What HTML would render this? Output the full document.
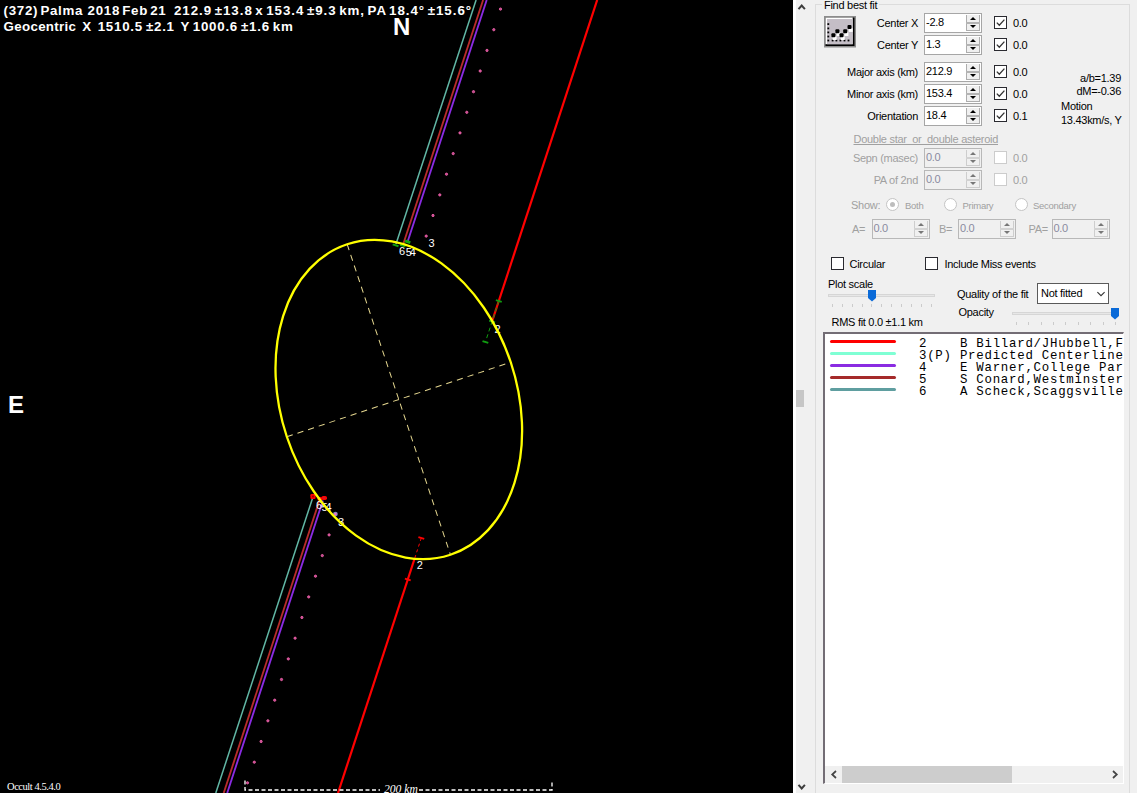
<!DOCTYPE html>
<html>
<head>
<meta charset="utf-8">
<title>Occult - Asteroid occultation plot</title>
<style>
html,body{margin:0;padding:0;background:#f0f0f0;overflow:hidden;}
body{width:1137px;height:793px;position:relative;font-family:"Liberation Sans",sans-serif;font-size:11px;color:#000;}
#plot{position:absolute;left:0;top:0;width:793px;height:793px;background:#000;overflow:hidden;}
#plot svg{position:absolute;left:0;top:0;}
.lab{font-size:11px;}
.pt{position:absolute;color:#fff;white-space:nowrap;line-height:1;}
#panel{position:absolute;left:793px;top:0;width:344px;height:793px;background:#f0f0f0;overflow:hidden;}
.l{letter-spacing:-0.28px;position:absolute;white-space:nowrap;line-height:13px;height:13px;font-size:11px;color:#000;}
.r{text-align:right;}
.dis{color:#a0a0a0;}
.num{position:absolute;box-sizing:border-box;border:1px solid #a6a6a6;background:#fff;height:20px;width:58px;}
.num span{position:absolute;left:1px;top:2px;font-size:11px;line-height:13px;letter-spacing:-0.28px;}
.num i{position:absolute;right:1px;top:1px;width:14px;height:16px;box-sizing:border-box;background:#f0f0f0;border-left:1px solid #adadad;border-right:1px solid #adadad;border-bottom:1px solid #adadad;}
.num i:before{content:"";position:absolute;left:3px;top:2.2px;border:3px solid transparent;border-top:0;border-bottom:3.4px solid #000;}
.num i:after{content:"";position:absolute;left:3px;top:10.2px;border:3px solid transparent;border-bottom:0;border-top:3.4px solid #000;}
.num b{position:absolute;right:1px;top:8px;width:14px;height:2px;background:#b4b4b4;}
.num.dis{background:#f0f0f0;border-color:#b8b8b8;}
.num.dis i{border-color:#cdcdcd;}
.num.dis b{background:#d2d2d2;}
.num.dis span{color:#8a8aa0;}
.num.dis i:before{border-bottom-color:#777;}
.num.dis i:after{border-top-color:#777;}
.cb{position:absolute;box-sizing:border-box;width:13px;height:13px;border:1px solid #2a2a30;background:#fff;}
.cb.dis{border-color:#ccc;}
.rad{position:absolute;box-sizing:border-box;width:13px;height:13px;border:1px solid #c4c4c4;border-radius:50%;background:#fff;}
</style>
</head>
<body>
<div id="plot">
<svg width="793" height="793" viewBox="0 0 793 793">
<!--SVG-->
<line x1="476.1" y1="0" x2="396.0" y2="244" stroke="#62b8a6" stroke-width="1.5" />
<line x1="312.8" y1="497.5" x2="215.8" y2="793" stroke="#62b8a6" stroke-width="1.5" />
<line x1="483.1" y1="0" x2="403.6" y2="243" stroke="#b82c2c" stroke-width="1.85" />
<line x1="319.9" y1="499" x2="223.7" y2="793" stroke="#b82c2c" stroke-width="1.85" />
<line x1="486.7" y1="0" x2="407.5" y2="242" stroke="#8a2be2" stroke-width="1.85" />
<line x1="322.9" y1="500.5" x2="227.2" y2="793" stroke="#8a2be2" stroke-width="1.85" />
<line x1="597.2" y1="0" x2="492.4" y2="320.5" stroke="#ff0000" stroke-width="2.2" />
<line x1="414.8" y1="558" x2="338" y2="793" stroke="#ff0000" stroke-width="2.2" />
<line x1="498.8" y1="301" x2="485.4" y2="342" stroke="#109c10" stroke-width="1" stroke-dasharray="4 3"/>
<line x1="421.3" y1="538" x2="414.8" y2="558" stroke="#ff0000" stroke-width="1" stroke-dasharray="3 3"/>
<line x1="495.9" y1="300.1" x2="501.7" y2="301.9" stroke="#109c10" stroke-width="1.9" />
<line x1="489.2" y1="320.6" x2="495.0" y2="322.4" stroke="#18a818" stroke-width="1.9" />
<line x1="482.5" y1="341.1" x2="488.3" y2="342.9" stroke="#109c10" stroke-width="1.9" />
<line x1="418.4" y1="537.1" x2="424.2" y2="538.9" stroke="#ff0000" stroke-width="1.9" />
<line x1="404.9" y1="578.6" x2="410.7" y2="580.4" stroke="#ff0000" stroke-width="1.9" />
<line x1="392.7" y1="244.4" x2="398.5" y2="246.2" stroke="#10a410" stroke-width="2" />
<line x1="400.1" y1="244.7" x2="405.5" y2="246.5" stroke="#10a410" stroke-width="2" />
<line x1="404.9" y1="240.9" x2="410.3" y2="242.7" stroke="#10a410" stroke-width="3" />
<rect x="310.4" y="494" width="5.2" height="5" rx="1.2" fill="#ff0000"/><rect x="312" y="495.6" width="2" height="1.8" fill="#a00000"/>
<rect x="317.4" y="497" width="5" height="3.6" rx="1.5" fill="#ff0000"/><rect x="321.4" y="496" width="5.6" height="4" rx="1.8" fill="#ff0000"/><rect x="323.4" y="497.4" width="2" height="1.4" fill="#b03030"/>
<circle cx="500.5" cy="9.1" r="1.15" fill="#c04890" stroke="#ff69b4" stroke-width="0.8"/>
<circle cx="493.8" cy="29.7" r="1.15" fill="#c04890" stroke="#ff69b4" stroke-width="0.8"/>
<circle cx="487.0" cy="50.4" r="1.15" fill="#c04890" stroke="#ff69b4" stroke-width="0.8"/>
<circle cx="480.2" cy="71.0" r="1.15" fill="#c04890" stroke="#ff69b4" stroke-width="0.8"/>
<circle cx="473.5" cy="91.7" r="1.15" fill="#c04890" stroke="#ff69b4" stroke-width="0.8"/>
<circle cx="466.8" cy="112.3" r="1.15" fill="#c04890" stroke="#ff69b4" stroke-width="0.8"/>
<circle cx="460.0" cy="132.9" r="1.15" fill="#c04890" stroke="#ff69b4" stroke-width="0.8"/>
<circle cx="453.2" cy="153.6" r="1.15" fill="#c04890" stroke="#ff69b4" stroke-width="0.8"/>
<circle cx="446.5" cy="174.2" r="1.15" fill="#c04890" stroke="#ff69b4" stroke-width="0.8"/>
<circle cx="439.8" cy="194.9" r="1.15" fill="#c04890" stroke="#ff69b4" stroke-width="0.8"/>
<circle cx="433.0" cy="215.5" r="1.15" fill="#c04890" stroke="#ff69b4" stroke-width="0.8"/>
<circle cx="426.2" cy="236.1" r="1.15" fill="#c04890" stroke="#ff69b4" stroke-width="0.8"/>
<circle cx="329.1" cy="534.9" r="1.15" fill="#c04890" stroke="#ff69b4" stroke-width="0.8"/>
<circle cx="322.3" cy="555.6" r="1.15" fill="#c04890" stroke="#ff69b4" stroke-width="0.8"/>
<circle cx="315.5" cy="576.2" r="1.15" fill="#c04890" stroke="#ff69b4" stroke-width="0.8"/>
<circle cx="308.7" cy="596.9" r="1.15" fill="#c04890" stroke="#ff69b4" stroke-width="0.8"/>
<circle cx="301.9" cy="617.5" r="1.15" fill="#c04890" stroke="#ff69b4" stroke-width="0.8"/>
<circle cx="295.1" cy="638.2" r="1.15" fill="#c04890" stroke="#ff69b4" stroke-width="0.8"/>
<circle cx="288.3" cy="658.9" r="1.15" fill="#c04890" stroke="#ff69b4" stroke-width="0.8"/>
<circle cx="281.5" cy="679.5" r="1.15" fill="#c04890" stroke="#ff69b4" stroke-width="0.8"/>
<circle cx="274.7" cy="700.2" r="1.15" fill="#c04890" stroke="#ff69b4" stroke-width="0.8"/>
<circle cx="267.9" cy="720.8" r="1.15" fill="#c04890" stroke="#ff69b4" stroke-width="0.8"/>
<circle cx="261.1" cy="741.5" r="1.15" fill="#c04890" stroke="#ff69b4" stroke-width="0.8"/>
<circle cx="254.3" cy="762.2" r="1.15" fill="#c04890" stroke="#ff69b4" stroke-width="0.8"/>
<circle cx="247.5" cy="782.8" r="1.15" fill="#c04890" stroke="#ff69b4" stroke-width="0.8"/>
<circle cx="335.4" cy="514.1" r="2.4" fill="#7f8cc4"/><circle cx="335.4" cy="514.1" r="1.3" fill="#f070c0"/>
<path d="M245 780.5V790H380 M419 790H552V780.5" fill="none" stroke="#fff" stroke-width="1.3" stroke-dasharray="4 2.5"/>
<!--/SVG-->
</svg>
<div class="pt" id="t1" style="left:3.6px;top:4px;font-size:13.33px;font-weight:bold;letter-spacing:0.98px;word-spacing:-2.2px;"><span style="letter-spacing:0.7px;">(372) Palma&nbsp; 2018 Feb 21</span>&nbsp;&nbsp; 212.9 ±13.8 x 153.4 ±9.3 km, PA 18.4° ±15.6°</div>
<div class="pt" id="t2" style="left:3.6px;top:20px;font-size:13.33px;font-weight:bold;letter-spacing:0.75px;word-spacing:-1.5px;"><span style="letter-spacing:0.3px;">Geocentric</span>&nbsp; X&nbsp; 1510.5 ±2.1&nbsp; Y 1000.6 ±1.6 km</div>
<div class="pt" id="tN" style="left:393px;top:15px;font-size:24px;font-weight:bold;">N</div>
<div class="pt" id="tE" style="left:8px;top:393px;font-size:24px;font-weight:bold;">E</div>
<div class="pt" id="tO" style="left:7px;top:782px;font-size:10.5px;letter-spacing:-0.45px;font-family:'Liberation Serif',serif;">Occult 4.5.4.0</div>
<div class="pt" id="tS" style="left:384px;top:783.5px;font-size:11.6px;font-style:italic;font-family:'Liberation Serif',serif;">200 km</div>
<div class="pt lab" style="left:399px;top:246px;">6</div>
<div class="pt lab" style="left:405.8px;top:247px;">5</div>
<div class="pt lab" style="left:409.8px;top:247px;">4</div>
<div class="pt lab" style="left:428.5px;top:238px;">3</div>
<div class="pt lab" style="left:494.5px;top:323.8px;">2</div>
<div class="pt lab" style="left:316px;top:500px;">6</div>
<div class="pt lab" style="left:321.5px;top:502.3px;">5</div>
<div class="pt lab" style="left:325.5px;top:502.3px;">4</div>
<div class="pt lab" style="left:338px;top:517.3px;">3</div>
<div class="pt lab" style="left:416.8px;top:560.4px;">2</div>
<svg width="793" height="793" viewBox="0 0 793 793"><g transform="rotate(-18.4 398.8 399.5)">
<line x1="398.8" y1="235.9" x2="398.8" y2="563.1" stroke="#e6d890" stroke-width="1" stroke-dasharray="6.2 5"/>
<line x1="280.8" y1="399.5" x2="516.8" y2="399.5" stroke="#e6d890" stroke-width="1" stroke-dasharray="6.2 5"/>
<ellipse cx="398.8" cy="399.5" rx="118" ry="163.6" fill="none" stroke="#ffff00" stroke-width="2.3"/>
</g></svg>
</div>
<div id="panel">
<!--P1-->
<div style="position:absolute;left:0;top:0;width:3px;height:793px;background:#fff;"></div>
<svg style="position:absolute;left:4px;top:3px;" width="10" height="8" viewBox="0 0 10 8"><path d="M1.5 6.2L4.7 2.6L7.9 6.2" fill="none" stroke="#3c3c3c" stroke-width="2"/></svg>
<svg style="position:absolute;left:4px;top:783px;" width="10" height="8" viewBox="0 0 10 8"><path d="M1.5 1.8L4.7 5.4L7.9 1.8" fill="none" stroke="#3c3c3c" stroke-width="2"/></svg>
<div style="position:absolute;left:3px;top:390px;width:8px;height:17px;background:#c6c6c6;"></div>
<div style="position:absolute;left:22px;top:4px;width:315px;height:800px;border:1px solid #dcdcdc;box-sizing:border-box;"></div>
<div class="l" style="left:29px;top:-1px;background:#f0f0f0;padding:0 2px;">Find best fit</div>
<div class="l r " style="right:219px;top:17.0px;">Center X</div>
<div class="num " style="left:131px;top:13px;width:58px;"><span>-2.8</span><i></i><b></b></div>
<div class="cb " style="left:201px;top:16.0px;"><svg width="11" height="11" viewBox="0 0 11 11"><path d="M1.8 5.6L4.3 8.2L9.4 2.6" fill="none" stroke="#333" stroke-width="1.3"/></svg></div>
<div class="l " style="left:220px;top:17.0px;">0.0</div>
<div class="l r " style="right:219px;top:39.0px;">Center Y</div>
<div class="num " style="left:131px;top:35px;width:58px;"><span>1.3</span><i></i><b></b></div>
<div class="cb " style="left:201px;top:38.0px;"><svg width="11" height="11" viewBox="0 0 11 11"><path d="M1.8 5.6L4.3 8.2L9.4 2.6" fill="none" stroke="#333" stroke-width="1.3"/></svg></div>
<div class="l " style="left:220px;top:39.0px;">0.0</div>
<div class="l r " style="right:219px;top:66.0px;">Major axis (km)</div>
<div class="num " style="left:131px;top:62px;width:58px;"><span>212.9</span><i></i><b></b></div>
<div class="cb " style="left:201px;top:65.0px;"><svg width="11" height="11" viewBox="0 0 11 11"><path d="M1.8 5.6L4.3 8.2L9.4 2.6" fill="none" stroke="#333" stroke-width="1.3"/></svg></div>
<div class="l " style="left:220px;top:66.0px;">0.0</div>
<div class="l r " style="right:219px;top:88.0px;">Minor axis (km)</div>
<div class="num " style="left:131px;top:84px;width:58px;"><span>153.4</span><i></i><b></b></div>
<div class="cb " style="left:201px;top:87.0px;"><svg width="11" height="11" viewBox="0 0 11 11"><path d="M1.8 5.6L4.3 8.2L9.4 2.6" fill="none" stroke="#333" stroke-width="1.3"/></svg></div>
<div class="l " style="left:220px;top:88.0px;">0.0</div>
<div class="l r " style="right:219px;top:110.0px;">Orientation</div>
<div class="num " style="left:131px;top:106px;width:58px;"><span>18.4</span><i></i><b></b></div>
<div class="cb " style="left:201px;top:109.0px;"><svg width="11" height="11" viewBox="0 0 11 11"><path d="M1.8 5.6L4.3 8.2L9.4 2.6" fill="none" stroke="#333" stroke-width="1.3"/></svg></div>
<div class="l " style="left:220px;top:110.0px;">0.1</div>
<div class="l r " style="right:16px;top:72.0px;">a/b=1.39</div>
<div class="l r " style="right:16px;top:85.0px;">dM=-0.36</div>
<div class="l " style="left:268px;top:99.5px;">Motion</div>
<div class="l " style="left:268px;top:113.5px;">13.43km/s, Y</div>
<div class="l dis" style="left:60.5px;top:132.8px;text-decoration:underline;">Double star&nbsp; or&nbsp; double asteroid</div>
<div class="l r dis" style="right:219px;top:152.0px;">Sepn (masec)</div>
<div class="num dis" style="left:131px;top:148px;width:58px;"><span>0.0</span><i></i><b></b></div>
<div class="cb dis" style="left:201px;top:151.0px;"></div>
<div class="l dis" style="left:220px;top:152.0px;">0.0</div>
<div class="l r dis" style="right:219px;top:174.0px;">PA of 2nd</div>
<div class="num dis" style="left:131px;top:170px;width:58px;"><span>0.0</span><i></i><b></b></div>
<div class="cb dis" style="left:201px;top:173.0px;"></div>
<div class="l dis" style="left:220px;top:174.0px;">0.0</div>
<div class="l dis" style="left:58px;top:199.0px;">Show:</div>
<div class="rad" style="margin-top:-0.7px;left:92.5px;top:199px;"><div style="position:absolute;left:3px;top:3px;width:5px;height:5px;border-radius:50%;background:#bdbdbd;"></div></div>
<div class="l dis" style="left:112px;top:199.0px;font-size:9.5px;">Both</div>
<div class="rad" style="margin-top:-0.7px;left:150.5px;top:199px;"></div>
<div class="l dis" style="left:169.5px;top:199.0px;font-size:9.5px;">Primary</div>
<div class="rad" style="margin-top:-0.7px;left:221.5px;top:199px;"></div>
<div class="l dis" style="left:240px;top:199.0px;font-size:9.5px;">Secondary</div>
<div class="l dis" style="left:59px;top:222.5px;">A=</div>
<div class="num dis" style="left:78.5px;top:219px;width:58px;"><span>0.0</span><i></i><b></b></div>
<div class="l dis" style="left:146px;top:222.5px;">B=</div>
<div class="num dis" style="left:165px;top:219px;width:58px;"><span>0.0</span><i></i><b></b></div>
<div class="l dis" style="left:235.5px;top:222.5px;">PA=</div>
<div class="num dis" style="left:258.5px;top:219px;width:58px;"><span>0.0</span><i></i><b></b></div>
<div class="cb " style="left:37.6px;top:256.5px;"></div>
<div class="l " style="left:56.5px;top:257.5px;">Circular</div>
<div class="cb " style="left:132px;top:256.5px;"></div>
<div class="l " style="left:151.5px;top:257.5px;">Include Miss events</div>
<div class="l " style="left:35px;top:277.5px;">Plot scale</div>
<div class="l " style="left:164px;top:288.0px;">Quality of the fit</div>
<div class="l " style="left:165.5px;top:306.0px;">Opacity</div>
<div class="l " style="left:38.5px;top:315.5px;">RMS fit 0.0 ±1.1 km</div>
<!--/P1-->
<!--P2-->
<svg style="position:absolute;left:31px;top:16px;" width="32" height="32" viewBox="824 16 32 32"><rect x="824" y="16" width="32" height="31.5" fill="#8c8c8c"/><rect x="825.5" y="17.5" width="29" height="28.5" fill="#000"/><rect x="825.5" y="17.5" width="27.2" height="26.7" fill="#fff"/><rect x="827" y="19" width="25.7" height="25.2" fill="#c4bec6"/><rect x="827.4" y="23.200000000000003" width="1.8" height="1.8" fill="#000"/><rect x="827.4" y="27.5" width="1.8" height="1.8" fill="#000"/><rect x="827.4" y="31.5" width="1.8" height="1.8" fill="#000"/><rect x="827.4" y="35.6" width="1.8" height="1.8" fill="#000"/><rect x="827.4" y="39.6" width="1.8" height="1.8" fill="#000"/><rect x="831.7" y="39.6" width="1.8" height="1.8" fill="#000"/><rect x="835.5" y="39.6" width="1.8" height="1.8" fill="#000"/><rect x="839.5" y="39.6" width="1.8" height="1.8" fill="#000"/><rect x="843.6" y="39.6" width="1.8" height="1.8" fill="#000"/><rect x="847.6" y="39.6" width="1.8" height="1.8" fill="#000"/><rect x="832.6" y="36.400000000000006" width="4" height="3.6" fill="#fff"/><rect x="836.6" y="32.4" width="4" height="3.6" fill="#fff"/><rect x="840.7" y="36.400000000000006" width="4" height="3.6" fill="#fff"/><rect x="844.4000000000001" y="32.4" width="4" height="3.6" fill="#fff"/><rect x="848.7" y="28.3" width="4" height="3.6" fill="#fff"/><rect x="831.4" y="33.2" width="4" height="4" rx="1" fill="#000"/><rect x="835.4" y="29.2" width="4" height="4" rx="1" fill="#000"/><rect x="839.5" y="33.2" width="4" height="4" rx="1" fill="#000"/><rect x="843.2" y="29.2" width="4" height="4" rx="1" fill="#000"/><rect x="847.5" y="25.1" width="4" height="4" rx="1" fill="#000"/></svg>
<div style="position:absolute;left:35.39999999999998px;top:293.5px;width:106.60000000000002px;height:3px;box-sizing:border-box;background:#e7e7e7;border:1px solid #d6d6d6;"></div><svg style="position:absolute;left:74px;top:289px;" width="10" height="14" viewBox="0 0 10 14"><path d="M1 1H9V9L5 12.6L1 9Z" fill="#0a6ad8"/></svg><div style="position:absolute;left:38.799999999999955px;top:304.3px;width:1px;height:3px;background:#cbcbcb;"></div><div style="position:absolute;left:48.719999999999914px;top:304.3px;width:1px;height:3px;background:#cbcbcb;"></div><div style="position:absolute;left:58.639999999999986px;top:304.3px;width:1px;height:3px;background:#cbcbcb;"></div><div style="position:absolute;left:68.55999999999995px;top:304.3px;width:1px;height:3px;background:#cbcbcb;"></div><div style="position:absolute;left:78.4799999999999px;top:304.3px;width:1px;height:3px;background:#cbcbcb;"></div><div style="position:absolute;left:88.39999999999998px;top:304.3px;width:1px;height:3px;background:#cbcbcb;"></div><div style="position:absolute;left:98.31999999999994px;top:304.3px;width:1px;height:3px;background:#cbcbcb;"></div><div style="position:absolute;left:108.24000000000001px;top:304.3px;width:1px;height:3px;background:#cbcbcb;"></div><div style="position:absolute;left:118.15999999999997px;top:304.3px;width:1px;height:3px;background:#cbcbcb;"></div><div style="position:absolute;left:128.07999999999993px;top:304.3px;width:1px;height:3px;background:#cbcbcb;"></div><div style="position:absolute;left:138.0px;top:304.3px;width:1px;height:3px;background:#cbcbcb;"></div>
<div style="position:absolute;left:219.20000000000005px;top:311.7px;width:105.79999999999995px;height:3px;box-sizing:border-box;background:#e7e7e7;border:1px solid #d6d6d6;"></div><svg style="position:absolute;left:317px;top:307.2px;" width="10" height="14" viewBox="0 0 10 14"><path d="M1 1H9V9L5 12.6L1 9Z" fill="#0a6ad8"/></svg><div style="position:absolute;left:223.0px;top:322.2px;width:1px;height:3px;background:#cbcbcb;"></div><div style="position:absolute;left:235.3599999999999px;top:322.2px;width:1px;height:3px;background:#cbcbcb;"></div><div style="position:absolute;left:247.72000000000003px;top:322.2px;width:1px;height:3px;background:#cbcbcb;"></div><div style="position:absolute;left:260.0799999999999px;top:322.2px;width:1px;height:3px;background:#cbcbcb;"></div><div style="position:absolute;left:272.44000000000005px;top:322.2px;width:1px;height:3px;background:#cbcbcb;"></div><div style="position:absolute;left:284.79999999999995px;top:322.2px;width:1px;height:3px;background:#cbcbcb;"></div><div style="position:absolute;left:297.1600000000001px;top:322.2px;width:1px;height:3px;background:#cbcbcb;"></div><div style="position:absolute;left:309.52px;top:322.2px;width:1px;height:3px;background:#cbcbcb;"></div><div style="position:absolute;left:321.8800000000001px;top:322.2px;width:1px;height:3px;background:#cbcbcb;"></div>
<div style="position:absolute;left:244px;top:283px;width:72px;height:21px;box-sizing:border-box;border:1px solid #5a5a5a;background:#fff;"><span style="position:absolute;left:3px;top:3px;font-size:11px;line-height:13px;letter-spacing:-0.28px;white-space:nowrap;">Not fitted</span><svg style="position:absolute;left:58px;top:7px;" width="10" height="6" viewBox="0 0 10 6"><path d="M1.4 1.2L5 4.7L8.6 1.2" fill="none" stroke="#333" stroke-width="1.1"/></svg></div>
<div id="lb" style="position:absolute;left:30px;top:332px;width:301px;height:452px;box-sizing:border-box;border-left:2px solid #736d75;border-top:2px solid #736d75;border-right:1px solid #fff;border-bottom:1px solid #fff;background:#fff;overflow:hidden;"><div style="position:absolute;left:5px;top:5.5px;width:66px;height:3px;border-radius:1.5px;background:#ff0000;"></div><div style="position:absolute;left:94px;top:3.0px;font-family:'Liberation Mono',monospace;font-size:12.4px;letter-spacing:0.75px;line-height:14px;white-space:pre;">2&nbsp;&nbsp;&nbsp;&nbsp;B Billard/JHubbell,F    </div><div style="position:absolute;left:5px;top:17.5px;width:66px;height:3px;border-radius:1.5px;background:#7fffd4;"></div><div style="position:absolute;left:94px;top:15.0px;font-family:'Liberation Mono',monospace;font-size:12.4px;letter-spacing:0.75px;line-height:14px;white-space:pre;">3(P) Predicted Centerline    </div><div style="position:absolute;left:5px;top:29.5px;width:66px;height:3px;border-radius:1.5px;background:#8a2be2;"></div><div style="position:absolute;left:94px;top:27.0px;font-family:'Liberation Mono',monospace;font-size:12.4px;letter-spacing:0.75px;line-height:14px;white-space:pre;">4&nbsp;&nbsp;&nbsp;&nbsp;E Warner,College Par    </div><div style="position:absolute;left:5px;top:41.5px;width:66px;height:3px;border-radius:1.5px;background:#a52a2a;"></div><div style="position:absolute;left:94px;top:39.0px;font-family:'Liberation Mono',monospace;font-size:12.4px;letter-spacing:0.75px;line-height:14px;white-space:pre;">5&nbsp;&nbsp;&nbsp;&nbsp;S Conard,Westminster    </div><div style="position:absolute;left:5px;top:53.5px;width:66px;height:3px;border-radius:1.5px;background:#5f9ea0;"></div><div style="position:absolute;left:94px;top:51.0px;font-family:'Liberation Mono',monospace;font-size:12.4px;letter-spacing:0.75px;line-height:14px;white-space:pre;">6&nbsp;&nbsp;&nbsp;&nbsp;A Scheck,Scaggsville    </div><div style="position:absolute;left:0;top:432px;width:299px;height:17px;background:#f0f0f0;"></div><div style="position:absolute;left:17px;top:432px;width:170px;height:17px;background:#cdcdcd;"></div><svg style="position:absolute;left:5px;top:436px;" width="8" height="9" viewBox="0 0 8 9"><path d="M6 1L2.2 4.5L6 8" fill="none" stroke="#444" stroke-width="1.7"/></svg><svg style="position:absolute;left:286px;top:436px;" width="8" height="9" viewBox="0 0 8 9"><path d="M2 1L5.8 4.5L2 8" fill="none" stroke="#444" stroke-width="1.7"/></svg></div>
<!--/P2-->
</div>
</body>
</html>
